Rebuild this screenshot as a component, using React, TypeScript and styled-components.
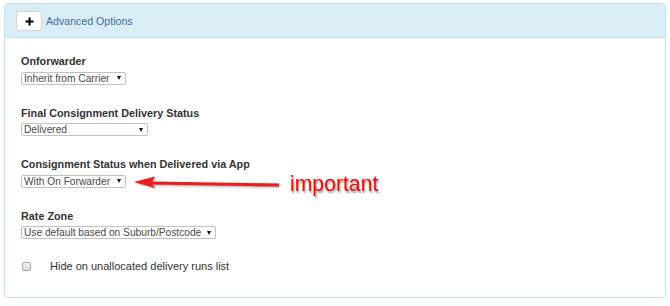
import { PropsWithChildren } from "react";
import styled, { createGlobalStyle } from "styled-components";

const GlobalStyle = createGlobalStyle`
  html, body {
    margin: 0;
    padding: 0;
    background: #fff;
  }
  body {
    font-family: "Liberation Sans", Arial, sans-serif;
    color: #333;
  }
`;

export default function App() {
  return (
    <>
      <GlobalStyle />
      <Page>
        <Panel>
          <PanelHeading>
            <ToggleButton type="button" aria-label="Toggle advanced options">
              <svg width="9" height="9" viewBox="0 0 9 9">
                <rect x="3.5" y="0.5" width="2.2" height="8" fill="#111" />
                <rect x="0.5" y="3.4" width="8" height="2.2" fill="#111" />
              </svg>
            </ToggleButton>
            <HeadingTitle>Advanced Options</HeadingTitle>
          </PanelHeading>

          <PanelBody>
            <FieldGroup>
              <FieldLabel>Onforwarder</FieldLabel>
              <Dropdown width={105} value="Inherit from Carrier" />
            </FieldGroup>

            <FieldGroup>
              <FieldLabel>Final Consignment Delivery Status</FieldLabel>
              <Dropdown width={127} value="Delivered" />
            </FieldGroup>

            <FieldGroup>
              <FieldLabel>Consignment Status when Delivered via App</FieldLabel>
              <AnnotatedRow>
                <Dropdown width={105} value="With On Forwarder" />
                <ArrowMark width="150" height="14" viewBox="0 0 150 14">
                  <path
                    d="M19 6.4 L147 8.6 L147 11.6 L19 9.6 Z"
                    fill="#ee1c1c"
                  />
                  <path d="M2 7 L23 1.5 L19.5 7.8 L23 13 Z" fill="#ee1c1c" />
                </ArrowMark>
                <Callout>important</Callout>
              </AnnotatedRow>
            </FieldGroup>

            <FieldGroup>
              <FieldLabel>Rate Zone</FieldLabel>
              <Dropdown width={195} value="Use default based on Suburb/Postcode" />
            </FieldGroup>

            <CheckRow>
              <CheckBox type="checkbox" />
              <CheckText>Hide on unallocated delivery runs list</CheckText>
            </CheckRow>
          </PanelBody>
        </Panel>
      </Page>
    </>
  );
}

const Dropdown = ({ width, value }: { width: number; value: string }) => (
  <SelectWrap>
    <NativeSelect $width={width} defaultValue={value}>
      <option>{value}</option>
    </NativeSelect>
    <Caret />
  </SelectWrap>
);

const Page = ({ children }: PropsWithChildren) => <Canvas>{children}</Canvas>;

const Canvas = styled.div`
  padding: 3px 4px 0 4px;
`;

const Panel = styled.div`
  border: 1px solid #bce8f1;
  border-radius: 4px;
  background: #fff;
  overflow: hidden;
`;

const PanelHeading = styled.div`
  display: flex;
  align-items: center;
  gap: 4px;
  height: 33px;
  padding: 0 11px;
  background: #d9edf7;
  border-bottom: 1px solid #bce8f1;
`;

const ToggleButton = styled.button`
  display: flex;
  align-items: center;
  justify-content: center;
  width: 26px;
  height: 20px;
  padding: 0;
  margin-top: 1px;
  background: #fff;
  border: 1px solid #cfd6da;
  border-radius: 3px;
  cursor: pointer;
`;

const HeadingTitle = styled.span`
  font-size: 10.6px;
  color: #3f6e9c;
`;

const PanelBody = styled.div`
  display: flex;
  flex-direction: column;
  padding: 16px 16px 24px 16px;
`;

const FieldGroup = styled.div`
  display: flex;
  flex-direction: column;
  align-items: flex-start;
  margin-bottom: 21px;
`;

const FieldLabel = styled.label`
  font-size: 10.8px;
  font-weight: bold;
  line-height: 14px;
  color: #333;
  margin-bottom: 3.5px;
`;

const SelectWrap = styled.span`
  position: relative;
  display: inline-flex;
`;

const NativeSelect = styled.select<{ $width: number }>`
  appearance: none;
  width: ${(p) => p.$width}px;
  height: 13px;
  box-sizing: border-box;
  margin: 0;
  padding: 0 12px 0 2px;
  border: 1px solid #c2c2c2;
  border-radius: 2px;
  background: #fff;
  font-family: "Liberation Sans", Arial, sans-serif;
  font-size: 10.2px;
  line-height: 11px;
  color: #4a4a4a;
  outline: none;
`;

const Caret = styled.span`
  position: absolute;
  right: 5px;
  top: 4.5px;
  width: 0;
  height: 0;
  border-left: 2.5px solid transparent;
  border-right: 2.5px solid transparent;
  border-top: 4px solid #111;
  pointer-events: none;
`;

const AnnotatedRow = styled.div`
  display: flex;
  align-items: center;
  height: 13px;
`;

const ArrowMark = styled.svg`
  margin-left: 6px;
  margin-top: 1px;
  overflow: visible;
  filter: drop-shadow(1px 1.5px 1px rgba(0, 0, 0, 0.35));
`;

const Callout = styled.span`
  margin-left: 8px;
  margin-top: 6px;
  font-size: 21.2px;
  line-height: 14px;
  color: #f00a0a;
  text-shadow: 1px 1.5px 1.5px rgba(0, 0, 0, 0.35);
  white-space: nowrap;
`;

const CheckRow = styled.div`
  display: flex;
  align-items: center;
  gap: 19px;
  height: 14px;
  margin-top: -1px;
`;

const CheckBox = styled.input`
  appearance: none;
  width: 9px;
  height: 9px;
  margin: 0 0 0 1px;
  box-sizing: border-box;
  border: 1px solid #a8a8a8;
  border-radius: 2px;
  background: linear-gradient(#f4f4f4, #dcdcdc);
`;

const CheckText = styled.span`
  font-size: 11px;
  line-height: 14px;
  color: #333;
`;
